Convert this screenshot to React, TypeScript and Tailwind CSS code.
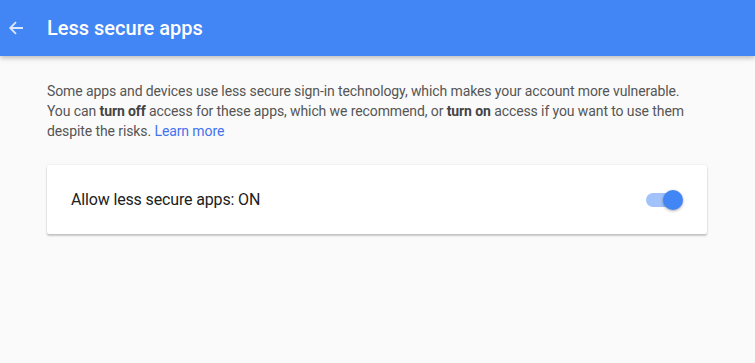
import React from "react";

export default function App() {
  return (
    <div className="w-[755px] h-[363px] bg-[#fafafa] overflow-hidden" style={{ fontFamily: "Roboto, 'Noto Sans', sans-serif" }}>
      <header className="h-[56px] bg-[#4285f4] flex items-center shadow-[0_2px_5px_rgba(0,0,0,0.26)] relative z-10">
        <div className="w-[47px] flex items-center pl-[8px]">
          <svg width="16" height="16" viewBox="0 0 16 16" fill="none">
            <path d="M15 8H2.5M8 2.2 2.2 8 8 13.8" stroke="#dbe7fd" strokeWidth="1.8" />
          </svg>
        </div>
        <h1 className="text-white text-[20px] font-medium leading-none pb-[1px]">Less secure apps</h1>
      </header>
      <div className="pl-[47px] pt-[25px] pr-[40px]">
        <p className="text-[14px] leading-[20px] text-[#555] tracking-[-0.1px]">
          Some apps and devices use less secure sign-in technology, which makes your account more vulnerable.
          <br />
          You can <b className="font-bold text-[#444]">turn off</b> access for these apps, which we recommend, or{" "}
          <b className="font-bold text-[#444]">turn on</b> access if you want to use them
          <br />
          despite the risks. <span className="text-[#4272ee]">Learn more</span>
        </p>
        <div className="mt-[24px] w-[660px] h-[69px] bg-white rounded-[2px] shadow-[0_2px_2px_rgba(0,0,0,0.2),0_0_2px_rgba(0,0,0,0.12)] flex items-center justify-between pl-[24px] pr-[24px]">
          <span className="text-[16px] text-[#212121] tracking-[-0.15px]">Allow less secure apps: ON</span>
          <div className="relative w-[35px] h-[14px] mr-[2px]">
            <div className="absolute inset-0 rounded-full bg-[#a1c2fa]" />
            <div className="absolute right-[-2px] top-[-3px] w-[20px] h-[20px] rounded-full bg-[#4285f4] shadow-[0_1px_3px_rgba(0,0,0,0.35)]" />
          </div>
        </div>
      </div>
    </div>
  );
}
